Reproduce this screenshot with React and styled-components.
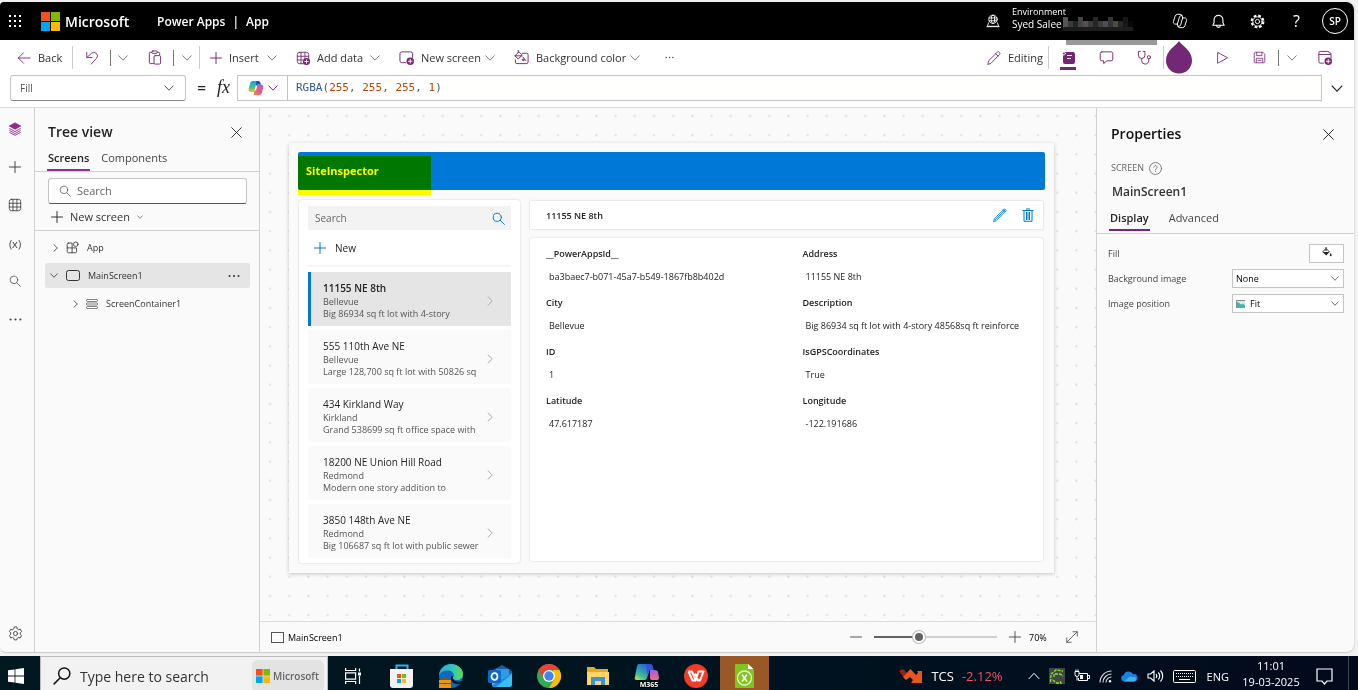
import React, { useState } from "react";
import styled, { createGlobalStyle } from "styled-components";

const purple = "#742774";

const sites = [
    { title: "11155 NE 8th", city: "Bellevue", text: "Big 86934 sq ft lot with 4-story" },
    { title: "555 110th Ave NE", city: "Bellevue", text: "Large 128,700 sq ft lot with 50826 sq" },
    { title: "434 Kirkland Way", city: "Kirkland", text: "Grand 538699 sq ft office space with" },
    { title: "18200 NE Union Hill Road", city: "Redmond", text: "Modern one story addition to" },
    { title: "3850 148th Ave NE", city: "Redmond", text: "Big 106687 sq ft lot with public sewer" },
];

const fields = [
    ["__PowerAppsId__", "ba3baec7-b071-45a7-b549-1867fb8b402d"],
    ["Address", "11155 NE 8th"],
    ["City", "Bellevue"],
    ["Description", "Big 86934 sq ft lot with 4-story 48568sq ft reinforce"],
    ["ID", "1"],
    ["IsGPSCoordinates", "True"],
    ["Latitude", "47.617187"],
    ["Longitude", "-122.191686"],
];

/* Icons */
const Icon = ({ size = 16, box = 16, sw = 1, children, ...rest }) => (
    <svg width={size} height={size} viewBox={`0 0 ${box} ${box}`} fill="none" stroke="currentColor"
        strokeWidth={sw} strokeLinecap="round" strokeLinejoin="round" aria-hidden="true" {...rest}>
        {children}
    </svg>
);

const Chevron = ({ w = 10, sw = 1 }) => (
    <svg width={w} height={w / 2 + 1} viewBox="0 0 10 6" fill="none" stroke="currentColor" strokeWidth={sw} aria-hidden="true">
        <path d="M.5.5 5 5.2 9.500.5" />
    </svg>
);

const ChevronRight = ({ h = 10 }) => (
    <svg width={h / 2 + 1} height={h} viewBox="0 0 6 10" fill="none" stroke="currentColor" aria-hidden="true">
        <path d="M.7.500 5.300 5 .7 9.500" />
    </svg>
);

const WindowsSquares = ({ size }) => (
    <svg width={size} height={size} viewBox="0 0 19 19" aria-hidden="true">
        <path fill="#f25022" d="M0 0h9v9H0z" />
        <path fill="#7fba00" d="M10 0h9v9h-9z" />
        <path fill="#00a4ef" d="M0 10h9v9H0z" />
        <path fill="#ffb900" d="M10 10h9v9h-9z" />
    </svg>
);

const Waffle = () => (
    <svg width="14" height="14" viewBox="0 0 14 14" fill="#fff" aria-hidden="true">
        {[1, 6, 11].map(y => [1, 6, 11].map(x => <rect key={`${x}-${y}`} x={x} y={y} width="2" height="2" />))}
    </svg>
);

const Search = ({ size = 12, sw }) => (
    <Icon size={size} sw={sw}><circle cx="6.500" cy="6.500" r="5" /><path d="m10.200 10.200 5 5" /></Icon>
);
const SearchLeft = () => (
    <Icon size={18} sw={1.300}><circle cx="10" cy="5.800" r="5" /><path d="M6.400 9.500 1 15" /></Icon>
);
const Plus = ({ size = 12 }) => <Icon size={size} box={12}><path d="M6 .5v11M.5 6h11" /></Icon>;
const Close = () => <Icon size={11} box={11} sw={.9}><path d="m.7.700 9.600 9.600m0-9.600L.7 10.300" /></Icon>;
const Dots = ({ size = 12 }) => (
    <Icon size={size} box={12} stroke="none" fill="currentColor">
        <circle cx="1.500" cy="6" r="1" /><circle cx="6" cy="6" r="1" /><circle cx="10.500" cy="6" r="1" />
    </Icon>
);
const Badge = () => <g><circle cx="12" cy="12" r="4" fill={purple} stroke="none" /><path stroke="#fff" d="M12 10v4m-2-2h4" /></g>;
const Back = () => <Icon size={14}><path d="M7.500 2 1.500 8l6 6M1.500 8H15" /></Icon>;
const Undo = () => <Icon size={14}><path d="M2 1.500v6h6M2.300 7.300l5-4.600a4 4 0 0 1 5.700 5.800L7 15" /></Icon>;
const Paste = () => (
    <Icon size={15}>
        <path d="M5 2.500H3.500a1 1 0 0 0-1 1v10a1 1 0 0 0 1 1H7M11 2.500h1.500a1 1 0 0 1 1 1V5" />
        <rect x="5" y="1" width="6" height="2.600" rx="1.200" /><rect x="7.500" y="6" width="7" height="9" rx="1.200" />
    </Icon>
);
const TableGrid = ({ size = 14, badge }) => (
    <Icon size={size}>
        <rect x="1.500" y="1.500" width="13" height="13" rx="2.500" />
        <path d="M1.500 6h13M1.500 10.300h13M5.700 1.500v13M10.200 1.500v13" />
        {badge && <Badge />}
    </Icon>
);
const NewScreenIcon = () => (
    <Icon size={15}><path d="M7 13.500H3a2 2 0 0 1-2-2V4a2 2 0 0 1 2-2h9.500a2 2 0 0 1 2 2v4" /><Badge /></Icon>
);
const PaintScreen = () => (
    <Icon size={15}>
        <path d="M9 3.500h4.500A1.500 1.500 0 0 1 15 5v8a1.500 1.500 0 0 1-1.500 1.500H3A1.500 1.500 0 0 1 1.500 13v-2.500" />
        <path d="m5 2.200-4 4 3.500 3.500 4-4zM1.200 6.200h7M4.500 0v3M9.500 7.500l3.300 4" /><circle cx="9.800" cy="10.500" r="1" />
    </Icon>
);
const Pencil = ({ size = 14 }) => (
    <Icon size={size}><path d="m1 15 1-4L11.700 1.500a1.600 1.600 0 0 1 2.500 0 1.700 1.700 0 0 1 0 2.600L4.700 13.900zM10 3.200l2.700 2.700" /></Icon>
);
const EditPen = () => (
    <Icon size={14}><path d="m.8 15.200.9-3L13 .9l2 2L3.700 14.300zM2.600 13.300 14 2M11.800 2.200l2 2" /></Icon>
);
const PropertiesIcon = () => (
    <svg width="13" height="13" viewBox="0 0 13 13" aria-hidden="true">
        <rect x="1" y="1" width="12" height="12" rx="2" fill={purple} /><path stroke="#fff" d="M5 4.500h5M5 7.500h4" /><path fill={purple} stroke="#fff" strokeWidth=".7" d="m1.800.400.6 1.400L4 2.400l-1.600.6-.6 1.500L1.200 3-.3 2.400l1.500-.6z" />
    </svg>
);
const Comment = () => (
    <Icon size={15}><path d="M3 2h10a1.700 1.700 0 0 1 1.700 1.700v6A1.700 1.700 0 0 1 13 11.500H8.500L5 14.500v-3H3a1.700 1.700 0 0 1-1.700-1.700v-6A1.700 1.700 0 0 1 3 2z" /></Icon>
);
const Checker = () => (
    <Icon size={15}>
        <path d="M3.500 1.500h-2v4a3.500 3.500 0 0 0 7 0v-4h-2M5 9v2.500a3.500 3.500 0 0 0 3.500 3.500c2.500 0 4-1.500 4-4V9.500" />
        <circle cx="12.700" cy="7.700" r="1.700" />
    </Icon>
);
const Play = () => <Icon size={14}><path d="M3 2v12l11-6z" /></Icon>;
const Save = () => (
    <Icon size={13}><path d="M1.500 3A1.500 1.500 0 0 1 3 1.500h9l2.500 2.500v9a1.500 1.500 0 0 1-1.500 1.500H3A1.500 1.500 0 0 1 1.500 13zM4.500 1.700v4h6.500v-4M4 14.300V9h8v5.300M6 11.500h4" /></Icon>
);
const Publish = () => (
    <Icon size={15}><path d="M7 14H3.500A1.500 1.500 0 0 1 2 12.500V3a1.500 1.500 0 0 1 1.500-1.500h8A1.500 1.500 0 0 1 13 3h.5A1.500 1.500 0 0 1 15 4.500v4M2 4.800h12.500" /><Badge /></Icon>
);
const Layers = () => (
    <svg width="14" height="14" viewBox="0 0 16 16" fill="none" stroke="#8f2c8f" aria-hidden="true">
        <path fill="#8f2c8f" d="m8 1 6.500 3.600L8 8.200 1.500 4.600z" /><path d="M1.500 7.300 8 11l6.500-3.700M1.500 9.500 8 13.200l6.500-3.700M1.500 11.700 8 15.300l6.500-3.600" />
    </svg>
);
const Gear = ({ size = 16, sw = 1 }) => (
    <Icon size={size} sw={sw}>
        <path d="m6.600 1.300-.4 1.800-1.500.9-1.800-.6-1.400 2.500 1.400 1.300v1.700l-1.400 1.300 1.400 2.500 1.800-.6 1.500.9.400 1.800h2.800l.4-1.800 1.500-.9 1.800.6 1.400-2.500-1.400-1.300V7.200l1.400-1.300-1.400-2.500-1.800.6-1.500-.9-.4-1.800z" />
        <circle cx="8" cy="8" r="2.200" />
    </Icon>
);
const SuiteGear = () => (
    <Icon size={15} sw={1}>
        <circle cx="8" cy="8" r="6.300" strokeDasharray="2.900 2.050" strokeWidth="2.200" strokeLinecap="butt" /><circle cx="8" cy="8" r="5" /><circle cx="8" cy="8" r="2.300" />
    </Icon>
);
const EnvironmentIcon = () => (
    <Icon size={14}>
        <circle cx="8" cy="6" r="4.800" /><ellipse cx="8" cy="6" rx="2" ry="4.800" /><path d="M3.500 4.500h9M3.500 7.700h9M3 10l-1.500 4h13L13 10M1 14.500h14" />
    </Icon>
);
const CopilotLine = () => (
    <Icon size={16} box={18} sw={1.100}>
        <path d="M12 5.500 11.300 3A2.200 2.200 0 0 0 9.200 1.500H6.300A3 3 0 0 0 3.500 3.600L1.600 9.500A2.300 2.300 0 0 0 3.800 12.500H6L8.300 4.700A2.800 2.800 0 0 1 11 2.700" />
        <path d="M6 12.500 6.700 15a2.200 2.200 0 0 0 2.100 1.500h2.900a3 3 0 0 0 2.800-2.100l1.900-5.900a2.300 2.300 0 0 0-2.200-3H12l-2.300 7.800A2.800 2.800 0 0 1 7 15.300" />
    </Icon>
);
const Bell = () => (
    <Icon size={15} sw={1.200}><path d="M8 1.500a4.700 4.700 0 0 0-4.700 4.700v3L2 12h12l-1.300-2.800v-3A4.700 4.700 0 0 0 8 1.500zM6 12.300a2 2 0 0 0 4 0" /></Icon>
);
const CopilotColor = () => (
    <svg width="16" height="16" viewBox="0 0 16 16" aria-hidden="true">
        <defs>
            <linearGradient id="cpA" x1="0" y1="0" x2="0" y2="1"><stop offset="0" stopColor="#1aa3e8" /><stop offset=".55" stopColor="#45c18a" /><stop offset="1" stopColor="#f0c419" /></linearGradient>
            <linearGradient id="cpB" x1="1" y1="0" x2="0" y2="1"><stop offset="0" stopColor="#a560e8" /><stop offset=".5" stopColor="#e8568c" /><stop offset="1" stopColor="#f58a42" /></linearGradient>
        </defs>
        <path fill="url(#cpA)" d="M4.500 1h6L7.300 12H3A2.500 2.500 0 0 1 .7 8.800L2.300 2.800A2.300 2.300 0 0 1 4.500 1z" />
        <path fill="url(#cpB)" d="M11.500 15h-6L8.700 4.500H13A2.400 2.400 0 0 1 15.300 7.500l-1.600 5.700A2.300 2.300 0 0 1 11.500 15z" />
        <path fill="#1e4fc2" d="M8 1h2.500A2 2 0 0 1 12.300 2.500l.7 2H9.500L8.300 8z" />
        <path fill="#fff" d="m7.800 5.500 1.500 0L8 10.500H6.500z" />
    </svg>
);
const AppIcon = () => (
    <Icon size={13}><path d="M3 2.500h4.500v12H3A1.500 1.500 0 0 1 1.500 13V4A1.500 1.500 0 0 1 3 2.500zM1.500 8.500H13v4.500a1.500 1.500 0 0 1-1.500 1.500h-4" /><circle cx="12" cy="4" r="2.800" /></Icon>
);
const ScreenIcon = ({ w = 14, r = 2 }) => (
    <svg width={w} height="11" viewBox={`0 0 ${w} 11`} fill="none" stroke="currentColor" aria-hidden="true"><rect x=".5" y=".5" width={w - 1} height="10" rx={r} /></svg>
);
const ContainerIcon = () => (
    <svg width="12" height="10" viewBox="0 0 12 10" fill="none" stroke="#666" strokeWidth=".8" aria-hidden="true">
        <rect x=".5" y=".5" width="11" height="2" rx=".6" /><rect x=".5" y="4" width="11" height="2" rx=".6" /><rect x=".5" y="7.500" width="11" height="2" rx=".6" />
    </svg>
);
const PaintBucket = () => (
    <svg width="12" height="12" viewBox="0 0 12 12" aria-hidden="true"><path fill="#222" d="M1.500 6h7L5.200 9.500z" /><path stroke="#222" fill="none" d="M1.500 6 5 2.500 8.500 6M5 5V1" /><path fill="#222" d="M9.700 7c1.300 1.800 1.200 3.300 0 3.300S8.500 8.800 9.700 7z" /></svg>
);
const Picture = () => (
    <svg width="9" height="8" viewBox="0 0 9 8" aria-hidden="true"><path fill="#d7eef0" d="M0 0h9v8H0z" /><path fill="#3fb8b4" d="m0 3 2-1 3 2.500 2-1 2 2V8H0z" /><path fill="none" stroke="#888" d="M.5 8V.5H9" /></svg>
);
const Trash = () => (
    <svg width="12" height="14" viewBox="0 0 12 14" fill="none" stroke="#0078d4" aria-hidden="true"><path d="M.5 2.500h11M2 2.500v10.800h8V2.500M4 1h4M4.500 4v8M6 4v8M7.500 4v8" /></svg>
);
const Expand = () => <Icon size={14}><path d="m2 14 12-12M9 2h5v5M2 9v5h5" /></Icon>;

const EnvironmentMosaic = () => (
    <svg width="74" height="16" viewBox="0 0 74 16" aria-hidden="true">
        {["#555", "#343d3a", "#242424", "#444", "#555058", "#3b3b3b", "#262626", "#3c3c42", "#4d4d5a", "#333", "#4b4d3d", "#272727", "#171717", "#080808"].map((c, i) => (
            <g key={i}><rect x={i * 5 + 2} y={i % 3 ? 5 : 1} width="5" height="10" fill={c} /><rect x={i * 5 + 2} y="11" width="5" height="4" fill="#1d1d1d" /></g>
        ))}
    </svg>
);

const DotGrid = () => (
    <DotSvg aria-hidden="true">
        <defs><pattern id="dots" width="19.2" height="19.2" patternUnits="userSpaceOnUse"><rect x="9" y="7" width="2" height="2" fill="#dedede" /></pattern></defs>
        <rect width="100%" height="100%" fill="url(#dots)" />
    </DotSvg>
);

/* Taskbar icons */
const StartLogo = () => (
    <svg width="16" height="16" viewBox="0 0 16 16" fill="#fff" aria-hidden="true"><path d="M0 2.300 6.600 1.400v6.100H0zM7.400 1.300 16 0v7.500H7.400zM0 8.400h6.600v6.200L0 13.700zM7.400 8.400H16V16l-8.600-1.300z" /></svg>
);
const TaskView = () => (
    <svg width="16" height="16" viewBox="0 0 16 16" fill="none" stroke="#fff" strokeWidth="1.2" aria-hidden="true"><path d="M.6 0v2.500h10V0M.6 16v-2.500h10V16M.6 4.800h10v6.400H.6zM14.500.5v3M14.500 8v8" /><path fill="#fff" stroke="none" d="M13 4.500h3v3h-3z" /></svg>
);
const Store = () => (
    <svg width="24" height="24" viewBox="0 0 24 24" aria-hidden="true"><path fill="none" stroke="#2fb4e8" strokeWidth="2" d="M6.500 6V1.500h11V6" /><path fill="#f3f3f3" d="M0 5h23v16a3 3 0 0 1-3 3H3a3 3 0 0 1-3-3z" /><path fill="#f25022" d="M7 10h4v4H7z" /><path fill="#7fba00" d="M12 10h4v4h-4z" /><path fill="#00a4ef" d="M7 15h4v4H7z" /><path fill="#ffb900" d="M12 15h4v4h-4z" /></svg>
);
const Edge = () => (
    <svg width="24" height="24" viewBox="0 0 24 24" aria-hidden="true">
        <defs><linearGradient id="edgeT" x1="0" x2="1"><stop offset="0" stopColor="#2aa5e0" /><stop offset=".6" stopColor="#35c7b5" /><stop offset="1" stopColor="#62d84e" /></linearGradient></defs>
        <circle cx="12" cy="12" r="12" fill="#1068b8" />
        <path fill="url(#edgeT)" d="M0 12C0 5 5.500 0 12 0s12 4.500 12 10c0 4-3 6-6 6s-5-1-3.500-3C16 10 13 6.500 9 6.500S1 8 0 12z" />
        <path fill="#001722" d="M14 12c-1 5 4 7 9.500 4.500-.5 1.500-1.500 3-2.500 3.500-6 1-10-3-9-7.500z" />
        <path fill="#e8941a" d="M0 16h12v8H0z" /><path fill="none" stroke="#8f5108" d="M4 16v-1.500h4V16M0 19.500h12M6 18.500v2" />
    </svg>
);
const Outlook = () => (
    <svg width="24" height="24" viewBox="0 0 24 24" aria-hidden="true"><path fill="#155ea8" d="M4 6.500 14 1l10 6v8H4z" /><path fill="#2d9be8" d="M8 5h13v10H8z" /><path fill="#37c1f2" d="m24 9-12 7-8-4v9a2 2 0 0 0 2 2h16a2 2 0 0 0 2-2z" /><path fill="#1f8be0" d="m4 21 20-12v1L8 23H6z" /><rect y="6" width="13" height="13" rx="1.500" fill="#1266c4" /><ellipse cx="6.500" cy="12.500" rx="3" ry="3.300" fill="none" stroke="#fff" strokeWidth="1.700" /></svg>
);
const Chrome = () => (
    <svg width="24" height="24" viewBox="0 0 24 24" aria-hidden="true"><circle cx="12" cy="12" r="12" fill="#34a853" /><path fill="#ea4335" d="M1.600 6A12 12 0 0 1 22.400 6H12L7 15z" /><path fill="#fbbc05" d="M22.400 6A12 12 0 0 1 12 24l5.200-9L16 6z" /><circle cx="12" cy="12" r="6" fill="#fff" /><circle cx="12" cy="12" r="4.700" fill="#4285f4" /></svg>
);
const Explorer = () => (
    <svg width="22" height="20" viewBox="0 0 22 20" aria-hidden="true"><path fill="#e8a825" d="M0 1h7l2 2h12v4H0z" /><path fill="#ffd666" d="M0 6h22v13H0z" /><path fill="#3d93d8" d="M4 19v-8h14v8h-4v-4H8v4z" /></svg>
);
const M365 = () => (
    <svg width="26" height="24" viewBox="0 0 26 24" aria-hidden="true">
        <defs><linearGradient id="mL" x1="0" y1="1" x2=".6" y2="0"><stop offset="0" stopColor="#e6dc3c" /><stop offset=".4" stopColor="#37b89a" /><stop offset="1" stopColor="#2466dd" /></linearGradient><linearGradient id="mR" x1="0" y1="0" x2="0" y2="1"><stop offset="0" stopColor="#a45be0" /><stop offset="1" stopColor="#f06c8a" /></linearGradient></defs>
        <path fill="url(#mL)" d="M5 0h10c2 0 2 1 1.500 3L13 14c-1 2-2 2-3 2H3c-2 0-3-1-2-3L3 2c.5-1.500 1-2 2-2z" /><path fill="#2c56d8" d="M12 0h4c2 0 2.500 1 3 3l1 3h-5l-2 5z" /><path fill="url(#mR)" d="M16 6h5c2 0 2.500 1 3 2l1 6c0 1-1 2-2 2h-5c-1 0-2-1-2-2z" />
        <text x="15" y="23" fontFamily="Open Sans, sans-serif" fontSize="7" fontWeight="700" fill="#fff" stroke="#000" strokeWidth="2" paintOrder="stroke" textAnchor="middle">M365</text>
    </svg>
);
const Wps = () => (
    <svg width="24" height="24" viewBox="0 0 24 24" aria-hidden="true"><circle cx="12" cy="12" r="12" fill="#f03c28" /><path fill="none" stroke="#fff" strokeWidth="2" strokeLinejoin="round" d="M4.500 7.500H8l3.500 9 3-9h5L16 16.500h-2l-3-7M4.500 7.500 8.500 16.500h2.500l1-2" /></svg>
);
const GreenSheet = () => (
    <svg width="19" height="24" viewBox="0 0 19 24" aria-hidden="true"><path fill="#80c41c" d="M1 0h12l6 6v18H1a1 1 0 0 1-1-1V1a1 1 0 0 1 1-1z" /><path fill="#fff" d="M13 0v5h5.500z" /><circle cx="9.500" cy="14" r="7" fill="none" stroke="#e7f7cf" strokeWidth="1.300" /><path stroke="#fff" strokeWidth="1.600" d="m7 10.500 5 7m0-7-5 7" /></svg>
);
const StockDown = () => (
    <svg width="24" height="16" viewBox="0 0 24 16" aria-hidden="true"><path fill="#8d2415" d="m0 3 4-2 5 5-3 5z" /><path fill="#e9551c" d="m4 9 7.500-8 5.500 6 2-2-1-2h5v12H12l2-3-3-3-4 3z" /></svg>
);
const Snip = () => (
    <svg width="16" height="16" viewBox="0 0 16 16" aria-hidden="true"><path fill="#454545" d="M0 0h16v16H0z" /><path fill="none" stroke="#7cf01c" strokeWidth="1.300" strokeDasharray="3 1" d="M1.500 14 2 6l5-4 7 1M5 9V6h6l3 2M6 14l-3-3M7 15h5l-1-2" /></svg>
);
const Battery = () => (
    <svg width="16" height="14" viewBox="0 0 16 14" fill="none" stroke="#fff" aria-hidden="true"><path d="M5 4.500h8.500v7H4.500V9M14 6.500h1.500v3H14M1 2.500h4v3a2 2 0 0 1-4 0zM2 2V.5M4 2V.5M3 7.500v4" /><path fill="#fff" stroke="none" d="M6 6h3v4H6z" /></svg>
);
const Wifi = () => (
    <svg width="13" height="13" viewBox="0 0 13 13" fill="none" stroke="#ddd" strokeWidth="1.100" aria-hidden="true"><path d="M1 12.500A11.500 11.500 0 0 1 12.500 1M4 12.500A8.500 8.500 0 0 1 12.500 4M7 12.500A5.500 5.500 0 0 1 12.500 7" /><circle cx="11" cy="11.300" r="1.200" fill="#fff" stroke="none" /></svg>
);
const Cloud = () => (
    <svg width="17" height="11" viewBox="0 0 17 11" aria-hidden="true"><path fill="#1683dc" d="M3.500 10.500a3.300 3.300 0 0 1-.8-6.500A5 5 0 0 1 12 3.200a3.700 3.700 0 0 1 1.500 7.300z" /><path fill="#42b0f2" d="m3 10.500 6-5 6 1a4 4 0 0 1-1.500 4z" /></svg>
);
const Speaker = () => (
    <svg width="17" height="14" viewBox="0 0 17 14" fill="none" stroke="#fff" strokeWidth="1.100" aria-hidden="true"><path d="M1 5h2.500L7 2v10L3.500 9H1zM9 5a3 3 0 0 1 0 4M11.300 3.500a5 5 0 0 1 0 7M13.500 1.500a8 8 0 0 1 0 11" /></svg>
);
const Keyboard = () => (
    <svg width="23" height="13" viewBox="0 0 23 13" fill="none" stroke="#fff" aria-hidden="true"><rect x=".5" y=".5" width="22" height="12" rx="1" /><path strokeDasharray="1 1" d="M3 3.500h17M3 6.500h17" /><path d="M6 9.500h11" /></svg>
);
const Notification = () => (
    <svg width="17" height="17" viewBox="0 0 17 17" fill="none" stroke="#fff" strokeWidth="1.200" aria-hidden="true"><path d="M1 1h15v12h-5l-2.500 3L6 13H1z" /></svg>
);

const App = () => {
    const [selected, setSelected] = useState(0);
    const [zoom, setZoom] = useState(35);

    return (
        <Page>
            <GlobalStyle />
            <Studio>
                {/* Black suite header */}
                <SuiteHeader>
                    <PlainButton aria-label="App launcher"><Waffle /></PlainButton>
                    <Brand><WindowsSquares size={19} />Microsoft</Brand>
                    <ProductName>Power Apps<i>|</i>App</ProductName>
                    <Environment>
                        <EnvironmentIcon />
                        <div><small>Environment</small><EnvName>Syed Salee<Redacted><EnvironmentMosaic /></Redacted></EnvName></div>
                        <GreyStrip />
                    </Environment>
                    <SuiteButton aria-label="Copilot"><CopilotLine /></SuiteButton>
                    <SuiteButton aria-label="Notifications"><Bell /></SuiteButton>
                    <SuiteButton aria-label="Settings"><SuiteGear /></SuiteButton>
                    <SuiteButton aria-label="Help"><HelpMark>?</HelpMark></SuiteButton>
                    <Avatar aria-label="Account">SP</Avatar>
                </SuiteHeader>

                {/* Command bar */}
                <CommandBar>
                    <Command $w={55} $first><Back /><span>Back</span></Command>
                    <Divider $tall />
                    <IconCommand $w={37} aria-label="Undo"><Undo /></IconCommand>
                    <Divider $dark />
                    <IconCommand $w={24} $grey aria-label="Undo options"><Chevron /></IconCommand>
                    <IconCommand $w={38} aria-label="Paste"><Paste /></IconCommand>
                    <Divider $dark />
                    <IconCommand $w={25} $grey aria-label="Paste options"><Chevron /></IconCommand>
                    <Divider $tall />
                    <Commands>
                        <Command $w={67} $menu><Plus /><span>Insert</span><Chevron /></Command>
                        <Command $w={84} $menu><TableGrid badge /><span>Add data</span><Chevron /></Command>
                        <Command $w={96} $menu><NewScreenIcon /><span>New screen</span><Chevron /></Command>
                        <Command $w={126} $menu><PaintScreen /><span>Background color</span><Chevron /></Command>
                        <IconCommand $w={20} aria-label="More commands"><Dots size={9} /></IconCommand>
                    </Commands>
                    <Command $w={61}><Pencil /><span>Editing</span></Command>
                    <Divider $tall />
                    <IconCommand $w={38} $active aria-label="Properties"><PropertiesIcon /></IconCommand>
                    <IconCommand $w={38} aria-label="Comments"><Comment /></IconCommand>
                    <IconCommand $w={38} aria-label="App checker"><Checker /></IconCommand>
                    <Divider $tall />
                    <Drop aria-hidden="true" width="28" height="33" viewBox="0 0 28 33"><path d="M14 0c2 4 13 9 13 19.500a13 13 0 0 1-26 0C1 9 12 4 14 0z" /></Drop>
                    <IconCommand $w={36} aria-label="Preview"><Play /></IconCommand>
                    <IconCommand $w={38} aria-label="Save"><Save /></IconCommand>
                    <Divider $dark />
                    <IconCommand $w={26} $grey aria-label="Save options"><Chevron /></IconCommand>
                    <IconCommand $w={38} aria-label="Publish"><Publish /></IconCommand>
                </CommandBar>

                {/* Formula bar */}
                <FormulaBar>
                    <PropertyPicker>
                        <select aria-label="Property"><option>Fill</option></select>
                        <Chevron />
                    </PropertyPicker>
                    <Equals>=</Equals>
                    <Fx>fx</Fx>
                    <CopilotButton aria-label="Copilot formula"><CopilotColor /><Chevron /></CopilotButton>
                    <Formula><b>RGBA</b>(<em>255</em>, <em>255</em>, <em>255</em>, <em>1</em>)</Formula>
                    <ExpandFormula aria-label="Expand formula bar"><Chevron w={12} /></ExpandFormula>
                </FormulaBar>

                <Workspace>
                    <Rail>
                        <RailButton aria-label="Tree view"><Layers /></RailButton>
                        <RailButton aria-label="Insert"><Plus /></RailButton>
                        <RailButton aria-label="Data"><TableGrid /></RailButton>
                        <RailButton aria-label="Variables">(x)</RailButton>
                        <RailButton aria-label="Search"><Search /></RailButton>
                        <RailButton aria-label="More"><Dots size={13} /></RailButton>
                        <RailButton aria-label="Settings" $last><Gear size={15} /></RailButton>
                    </Rail>

                    <TreePanel>
                        <PanelHead $pad="10px 17px 0 13px"><h2>Tree view</h2><PlainButton aria-label="Close tree view"><Close /></PlainButton></PanelHead>
                        <Tabs $pad="12px" $line="#8f2c8f">
                            <Tab $on>Screens</Tab>
                            <Tab>Components</Tab>
                        </Tabs>
                        <TreeSearch><Search /><input placeholder="Search" aria-label="Search tree" /></TreeSearch>
                        <NewScreen><Plus />New screen<Chevron w={6} /></NewScreen>
                        <Tree>
                            <TreeRow $indent={8}><ChevronRight h={8} /><AppIcon /><span>App</span></TreeRow>
                            <TreeRow $indent={5} $on><Chevron w={8} /><ScreenIcon /><span>MainScreen1</span><PlainButton aria-label="More actions"><Dots /></PlainButton></TreeRow>
                            <TreeRow $indent={28}><ChevronRight h={8} /><ContainerIcon /><span>ScreenContainer1</span></TreeRow>
                        </Tree>
                    </TreePanel>

                    <CanvasColumn>
                        <Canvas>
                            <DotGrid />
                            <Artboard>
                                <AppTitle>SiteInspector<Highlight /></AppTitle>
                                <AppBody>
                                    <Gallery>
                                        <GallerySearch><input placeholder="Search" aria-label="Search sites" /><Search size={13} sw={1.200} /></GallerySearch>
                                        <NewRecord><Plus />New</NewRecord>
                                        {sites.map((site, i) => (
                                            <Site key={site.title} $on={i === selected} onClick={() => setSelected(i)}>
                                                <div><strong>{site.title}</strong><p>{site.city}</p><p>{site.text}</p></div>
                                                <ChevronRight h={10} />
                                            </Site>
                                        ))}
                                    </Gallery>
                                    <Detail>
                                        <DetailHead>
                                            <h3>11155 NE 8th</h3>
                                            <PlainButton aria-label="Edit"><EditPen /></PlainButton>
                                            <PlainButton aria-label="Delete"><Trash /></PlainButton>
                                        </DetailHead>
                                        <DetailBody>
                                            {fields.map(([label, value]) => (
                                                <Field key={label}><dt>{label}</dt><dd>{value}</dd></Field>
                                            ))}
                                        </DetailBody>
                                    </Detail>
                                </AppBody>
                            </Artboard>
                        </Canvas>
                        <StatusBar>
                            <ScreenIcon w={13} r={0} />
                            <span>MainScreen1</span>
                            <PlainButton aria-label="Zoom out"><Icon size={12} box={12}><path d="M.5 6h11" /></Icon></PlainButton>
                            <Zoom type="range" aria-label="Zoom" value={zoom} onChange={e => setZoom(Number(e.target.value))} style={{ "--fill": `${zoom}%` }} />
                            <PlainButton aria-label="Zoom in"><Plus /></PlainButton>
                            <output>70%</output>
                            <PlainButton aria-label="Fit to window"><Expand /></PlainButton>
                        </StatusBar>
                    </CanvasColumn>

                    <PropsPanel>
                        <PanelHead $pad="12px 20px 0 14px"><h2>Properties</h2><PlainButton aria-label="Close properties"><Close /></PlainButton></PanelHead>
                        <Kind>SCREEN<Icon size={13}><circle cx="8" cy="8" r="7.400" /><path d="M6 6.300a2 2 0 1 1 3 1.800c-.7.400-1 .8-1 1.600M8 11.600v.2" /></Icon></Kind>
                        <ObjectName>MainScreen1</ObjectName>
                        <Tabs $pad="12px" $line={purple}>
                            <Tab $on>Display</Tab>
                            <Tab>Advanced</Tab>
                        </Tabs>
                        <PropRow><span>Fill</span><FillButton aria-label="Fill color"><PaintBucket /></FillButton></PropRow>
                        <PropRow>
                            <label htmlFor="bg-image">Background image</label>
                            <SelectBox><select id="bg-image"><option>None</option></select><Chevron w={8} /></SelectBox>
                        </PropRow>
                        <PropRow>
                            <label htmlFor="image-position">Image position</label>
                            <SelectBox><Picture /><select id="image-position"><option>Fit</option></select><Chevron w={8} /></SelectBox>
                        </PropRow>
                    </PropsPanel>
                </Workspace>
            </Studio>

            {/* Windows taskbar */}
            <Taskbar>
                <TaskInner>
                    <StartButton aria-label="Start"><StartLogo /></StartButton>
                    <TaskSearch>
                        <SearchLeft />
                        <input placeholder="Type here to search" aria-label="Type here to search" />
                        <Pill><WindowsSquares size={14} />Microsoft</Pill>
                    </TaskSearch>
                    <TaskButton aria-label="Task view"><TaskView /></TaskButton>
                    <TaskButton aria-label="Store"><Store /></TaskButton>
                    <TaskButton aria-label="Edge"><Edge /></TaskButton>
                    <TaskButton aria-label="Outlook"><Outlook /></TaskButton>
                    <TaskButton aria-label="Chrome"><Chrome /></TaskButton>
                    <TaskButton aria-label="File Explorer"><Explorer /></TaskButton>
                    <TaskButton aria-label="Microsoft 365"><M365 /></TaskButton>
                    <TaskButton aria-label="WPS"><Wps /></TaskButton>
                    <TaskButton aria-label="Spreadsheet" $on><GreenSheet /></TaskButton>
                    <Stock><StockDown /><span>TCS</span><em>-2.12%</em></Stock>
                    <Tray>
                        <TrayUp width="12" height="8" viewBox="0 0 12 8" aria-hidden="true"><path d="M.7 7 6 1.300 11.300 7" /></TrayUp>
                        <Snip /><Battery /><Wifi /><Cloud /><Speaker /><Keyboard />
                    </Tray>
                    <Language>ENG</Language>
                    <Clock><span>11:01</span><span>19-03-2025</span></Clock>
                    <NotifyButton aria-label="Notifications"><Notification /></NotifyButton>
                </TaskInner>
            </Taskbar>
        </Page>
    );
};

const GlobalStyle = createGlobalStyle`
    * { box-sizing: border-box; }
    body {
        margin: 0;
        font-family: "Open Sans", "Noto Sans", sans-serif;
        font-size: 11px;
        color: #242424;
    }
    h2, h3, p, dl, dd { margin: 0; }
    button, input, select { font: inherit; color: inherit; }
    svg { flex: none; display: block; }
`;
const Page = styled.div`
    display: flex;
    flex-direction: column;
    height: 100vh;
    overflow: hidden;
    background: #f3f3f3;
`;
const Studio = styled.div`
    flex: 1;
    min-height: 0;
    display: flex;
    flex-direction: column;
    margin: 2px 4px 3px 0;
    border-bottom: 1px solid #d0d0d0;
    border-radius: 4px 8px 8px 6px;
    overflow: hidden;
    background: #fafafa;
    box-shadow: 1px 0 2px #ddd;
`;
const PlainButton = styled.button`
    display: flex;
    align-items: center;
    border: 0;
    padding: 0;
    background: none;
`;
const SuiteHeader = styled.header`
    display: flex;
    align-items: center;
    height: 38px;
    flex: none;
    padding: 0 6px 0 8px;
    background: #000;
    color: #fff;
`;
const Brand = styled.div`
    display: flex;
    align-items: center;
    gap: 5px;
    width: 116px;
    margin-left: 19px;
    font-size: 14px;
    font-weight: 600;
`;
const ProductName = styled.div`
    flex: 1;
    font-size: 12px;
    font-weight: 600;

    i {
        margin: 0 7px;
        font-style: normal;
    }
`;
const Environment = styled.div`
    position: relative;
    display: flex;
    align-items: center;
    gap: 12px;
    width: 174px;
    line-height: 13px;

    div { padding-bottom: 6px; }
    small {
        display: block;
        font-size: 9px;
        line-height: 12px;
    }
`;
const EnvName = styled.span`
    display: flex;
    align-items: center;
    height: 13px;
    font-size: 10px;
`;
const Redacted = styled.span`
    margin-left: -1px;
`;
const GreyStrip = styled.span`
    position: absolute;
    left: 80px;
    bottom: -8px;
    width: 91px;
    height: 5px;
    background: #999;
`;
const SuiteButton = styled(PlainButton)`
    justify-content: center;
    width: 39px;
    height: 38px;
`;
const HelpMark = styled.span`
    font-size: 16px;
`;
const Avatar = styled(PlainButton)`
    justify-content: center;
    width: 26px;
    height: 26px;
    margin-left: 6px;
    border: 1px solid #fff;
    border-radius: 50%;
    font-size: 10px;
    font-weight: 600;
`;
const CommandBar = styled.div`
    display: flex;
    align-items: center;
    height: 35px;
    flex: none;
    padding-right: 11px;
    background: #fff;
`;
const Commands = styled.div`
    display: flex;
    align-items: center;
    flex: 1;
    gap: 19px;
    padding-left: 10px;
`;
const Command = styled.button`
    display: flex;
    align-items: center;
    gap: 7px;
    width: ${p => p.$w}px;
    height: 28px;
    margin: ${p => (p.$first ? "0 0 0 17px" : "0")};
    padding: 0;
    border: 0;
    background: none;
    color: ${purple};
    white-space: nowrap;

    span {
        flex: 1;
        margin-right: ${p => (p.$menu ? "-4px" : "0")};
        text-align: left;
        color: #333;
    }
    svg:last-child { color: #7b7f86; }
`;
const IconCommand = styled.button`
    display: flex;
    align-items: center;
    justify-content: center;
    width: ${p => p.$w}px;
    height: 24px;
    padding: 0;
    border: 0;
    background: ${p => (p.$active ? `linear-gradient(${purple}, ${purple}) center bottom / 16px 3px no-repeat` : "none")};
    color: ${p => (p.$grey ? "#7b7f86" : purple)};
`;
const Divider = styled.span`
    flex: none;
    width: 1px;
    height: ${p => (p.$tall ? 23 : 16)}px;
    background: ${p => (p.$dark ? "#777" : "#ccc")};
`;
const Drop = styled.svg`
    margin: 0 11px 0 1px;
    fill: ${purple};
`;
const FormulaBar = styled.div`
    display: flex;
    height: 33px;
    flex: none;
    padding: 0 0 6px 10px;
    border-bottom: 1px solid #dcdcdc;
    background: #fff;
`;
const PropertyPicker = styled.div`
    display: flex;
    align-items: center;
    width: 176px;
    padding-right: 11px;
    border: 1px solid #c4c4c4;
    border-bottom-color: #888;
    border-radius: 3px;
    color: #555;

    select {
        flex: 1;
        padding: 0 9px;
        border: 0;
        appearance: none;
        background: none;
        font-size: 10px;
    }
`;
const Equals = styled.span`
    width: 31px;
    text-align: center;
    font-size: 16px;
    line-height: 26px;
`;
const Fx = styled.span`
    width: 20px;
    font: italic 18px/24px "Liberation Serif", serif;
    color: #222;
`;
const CopilotButton = styled.button`
    display: flex;
    align-items: center;
    justify-content: center;
    gap: 4px;
    width: 51px;
    padding: 0;
    border: 1px solid #c4c4c4;
    background: #fff;
    color: ${purple};
`;
const Formula = styled.code`
    flex: 1;
    padding-left: 8px;
    border: 1px solid #c4c4c4;
    border-left: 0;
    background: #fffffe;
    font: 11px/23px "DejaVu Sans Mono", monospace;
    color: #555;

    b {
        font-weight: 400;
        color: #2b5797;
    }
    em {
        font-style: normal;
        color: #b5480d;
    }
`;
const ExpandFormula = styled(PlainButton)`
    justify-content: center;
    width: 29px;
    margin-right: 3px;
`;
const Workspace = styled.div`
    display: flex;
    flex: 1;
    min-height: 0;
`;
const Rail = styled.nav`
    display: flex;
    flex-direction: column;
    width: 35px;
    padding-top: 2px;
    border-right: 1px solid #d1d1d1;
`;
const RailButton = styled.button`
    display: flex;
    align-items: center;
    justify-content: center;
    width: 30px;
    height: 38px;
    margin-top: ${p => (p.$last ? "auto" : "0")};
    padding: 0;
    border: 0;
    background: none;
    color: #444;
`;
const TreePanel = styled.aside`
    width: 225px;
    border-right: 1px solid #d1d1d1;
`;
const PanelHead = styled.div`
    display: flex;
    justify-content: space-between;
    align-items: center;
    padding: ${p => p.$pad};

    h2 {
        font-size: 14px;
        line-height: 28px;
        font-weight: 600;
    }
`;
const Tabs = styled.div`
    display: flex;
    gap: 10px;
    height: 26px;
    padding: 0 ${p => p.$pad};
    border-bottom: 1px solid #d1d1d1;
    --line: ${p => p.$line};
`;
const Tab = styled.button`
    height: 25px;
    padding: 0 1px;
    border: 0;
    border-bottom: 2px solid ${p => (p.$on ? "var(--line)" : "transparent")};
    background: none;
    font-weight: ${p => (p.$on ? 600 : 400)};
    line-height: 20px;
    color: ${p => (p.$on ? "#242424" : "#444")};
`;
const TreeSearch = styled.div`
    display: flex;
    align-items: center;
    gap: 6px;
    height: 26px;
    margin: 6px 12px 0 13px;
    padding-left: 10px;
    border: 1px solid #c4c4c4;
    border-bottom-color: #555;
    border-radius: 3px;
    background: #fff;
    color: #555;

    input {
        flex: 1;
        min-width: 0;
        padding: 0 0 1px;
        border: 0;
        outline: 0;
        background: none;
    }
    input::placeholder { color: #666; }
`;
const NewScreen = styled.button`
    display: flex;
    align-items: center;
    gap: 7px;
    width: 100%;
    height: 27px;
    padding: 0 0 1px 16px;
    border: 0;
    border-bottom: 1px solid #d1d1d1;
    background: none;
    color: #333;
`;
const Tree = styled.div`
    display: flex;
    flex-direction: column;
    gap: 3px;
    padding: 4px 9px 0 10px;
`;
const TreeRow = styled.div`
    display: flex;
    align-items: center;
    gap: 8px;
    height: 25px;
    padding: 0 10px 0 ${p => p.$indent}px;
    border-radius: 2px;
    background: ${p => (p.$on ? "#e5e5e5" : "none")};
    font-size: 9px;
    color: #333;

    span { flex: 1; }
`;
const CanvasColumn = styled.main`
    display: flex;
    flex-direction: column;
    flex: 1;
    min-width: 0;
`;
const Canvas = styled.div`
    position: relative;
    display: flex;
    flex: 1;
    min-height: 0;
    padding: 35px 42px 48px 29px;
`;
const DotSvg = styled.svg`
    position: absolute;
    inset: 0;
    width: 100%;
    height: 100%;
`;
const Artboard = styled.div`
    position: relative;
    display: flex;
    flex-direction: column;
    flex: 1;
    min-width: 0;
    padding: 9px;
    background: #fafafa;
    box-shadow: 0 1px 4px rgba(0, 0, 0, 0.22);
`;
const AppTitle = styled.div`
    position: relative;
    height: 38px;
    flex: none;
    padding-left: 8px;
    border-radius: 2px;
    background: #0078d7;
    color: #fff;
    font-weight: 700;
    line-height: 38px;
`;
const Highlight = styled.span`
    position: absolute;
    top: 4px;
    left: 0;
    width: 133px;
    height: 39px;
    background: #ff0;
    mix-blend-mode: multiply;
`;
const AppBody = styled.div`
    display: flex;
    flex: 1;
    min-height: 0;
    gap: 10px;
    padding: 10px 2px 1px 1px;
`;
const Gallery = styled.section`
    display: flex;
    flex-direction: column;
    width: 221px;
    padding: 6px 9px 0;
    border-radius: 3px;
    background: #fff;
    box-shadow: 0 0 2px rgba(0, 0, 0, 0.2);
`;
const GallerySearch = styled.div`
    display: flex;
    align-items: center;
    height: 24px;
    padding: 0 6px 0 7px;
    background: #f3f3f3;
    color: #0078d4;

    input {
        flex: 1;
        min-width: 0;
        padding: 0;
        border: 0;
        background: none;
        font-size: 10px;
    }
    input::placeholder { color: #666; }
`;
const NewRecord = styled.button`
    display: flex;
    align-items: center;
    gap: 9px;
    height: 37px;
    flex: none;
    margin-bottom: 5px;
    padding: 0 0 0 6px;
    border: 0;
    border-bottom: 2px solid #f5f5f5;
    background: none;
    font-size: 10px;

    svg { color: #0078d4; }
`;
const Site = styled.button`
    display: flex;
    align-items: center;
    justify-content: space-between;
    height: 54px;
    flex: none;
    margin-bottom: 4px;
    padding: 3px 18px 0 12px;
    border: 0;
    border-left: 3px solid ${p => (p.$on ? "#0078d4" : "#fafafa")};
    background: ${p => (p.$on ? "#e5e5e5" : "#fafafa")};
    text-align: left;
    white-space: nowrap;

    strong {
        display: block;
        margin-bottom: 1px;
        font-size: 10px;
        font-weight: ${p => (p.$on ? 600 : 400)};
        line-height: 14px;
    }
    p {
        font-size: 9px;
        line-height: 12px;
        color: #555;
    }
    svg { color: #aaa; }
`;
const Detail = styled.section`
    display: flex;
    flex-direction: column;
    flex: 1;
    min-width: 0;
    gap: 9px;
    padding: 1px 0 2px;
`;
const DetailHead = styled.div`
    display: flex;
    align-items: center;
    gap: 15px;
    height: 28px;
    flex: none;
    padding: 0 9px 0 16px;
    border-radius: 1px;
    background: #fff;
    box-shadow: 0 0 2px rgba(0, 0, 0, 0.25);
    color: #0078d4;

    h3 {
        flex: 1;
        font-size: 9px;
        font-weight: 600;
        color: #242424;
    }
`;
const DetailBody = styled.dl`
    display: grid;
    grid-template-columns: 1fr 1fr;
    align-content: start;
    flex: 1;
    padding-top: 8px;
    border-radius: 2px;
    background: #fff;
    box-shadow: 0 0 2px rgba(0, 0, 0, 0.2);
    font-size: 9px;
`;
const Field = styled.div`
    min-width: 0;
    height: 49px;
    padding: 0 19px 0 16px;

    dt {
        font-weight: 600;
        line-height: 16px;
    }
    dd {
        margin-top: 7px;
        padding-left: 3px;
        overflow: hidden;
        white-space: nowrap;
        line-height: 15px;
    }
`;
const StatusBar = styled.footer`
    display: flex;
    align-items: center;
    height: 31px;
    flex: none;
    padding: 0 17px 0 11px;
    border-top: 1px solid #dcdcdc;
    color: #555;
    font-size: 9px;

    span {
        flex: 1;
        padding-left: 4px;
        color: #000;
    }
    output {
        width: 44px;
        padding-left: 8px;
        color: #000;
    }
`;
const Zoom = styled.input`
    width: 123px;
    height: 14px;
    margin: 0 12px;
    appearance: none;
    background: linear-gradient(#616161, #616161) left center / var(--fill) 2px no-repeat,
        linear-gradient(#d1d1d1, #d1d1d1) center / 100% 2px no-repeat;

    &::-webkit-slider-thumb {
        appearance: none;
        width: 12px;
        height: 12px;
        border: 2px solid #fff;
        border-radius: 50%;
        background: #616161;
        box-shadow: 0 0 0 1px #bbb;
    }
`;
const PropsPanel = styled.aside`
    width: 258px;
    border-left: 1px solid #d1d1d1;

    ${PanelHead} { color: #111; }
    ${Tabs} {
        gap: 18px;
        height: 28px;
        margin-bottom: 7px;
    }
`;
const Kind = styled.div`
    display: flex;
    align-items: center;
    gap: 5px;
    padding: 12px 0 0 14px;
    line-height: 16px;
    font-size: 9px;
    color: #666;
`;
const ObjectName = styled.div`
    padding: 7px 0 6px 15px;
    font-size: 12px;
    font-weight: 600;
    line-height: 17px;
    color: #333;
`;
const PropRow = styled.div`
    display: flex;
    align-items: center;
    justify-content: space-between;
    height: 25px;
    padding: 0 10px 0 11px;
    font-size: 9px;
    color: #444;
`;
const FillButton = styled.button`
    display: flex;
    justify-content: center;
    width: 35px;
    height: 19px;
    padding: 1px 0 0;
    border: 1px solid #c4c4c4;
    background: #fff;
`;
const SelectBox = styled.div`
    display: flex;
    align-items: center;
    width: 112px;
    height: 19px;
    padding: 0 4px 0 3px;
    border: 1px solid #c4c4c4;
    background: #fff;

    select {
        flex: 1;
        min-width: 0;
        padding: 0;
        border: 0;
        appearance: none;
        background: none;
        color: #000;
    }
    svg + select { padding-left: 5px; }
`;
const Taskbar = styled.footer`
    height: 34px;
    flex: none;
    overflow: hidden;
    background: linear-gradient(90deg, #00181f, #001420 50%, #020a1c);
    color: #fff;
`;
const TaskInner = styled.div`
    display: flex;
    align-items: center;
    height: 40px;
`;
const StartButton = styled(PlainButton)`
    justify-content: center;
    width: 32px;
    margin-right: 8px;
`;
const TaskSearch = styled.div`
    display: flex;
    align-items: center;
    width: 288px;
    height: 40px;
    padding: 0 3px 0 12px;
    border: 1px solid #bbb;
    background: #f2f2f2;
    color: #111;

    input {
        flex: 1;
        min-width: 0;
        padding: 0 0 0 9px;
        border: 0;
        background: none;
        font-size: 14px;
    }
    input::placeholder { color: #333; }
`;
const Pill = styled.span`
    display: flex;
    align-items: center;
    gap: 3px;
    width: 72px;
    height: 32px;
    padding-left: 4px;
    border-radius: 5px;
    background: #e3e3e3;
    color: #666;
    font-size: 10px;
    font-weight: 600;
`;
const TaskButton = styled.button`
    display: flex;
    align-items: center;
    justify-content: center;
    width: 49px;
    height: 40px;
    padding: 0;
    border: 0;
    background: ${p => (p.$on ? "#985926" : "none")};
`;
const Stock = styled.div`
    display: flex;
    align-items: center;
    gap: 8px;
    margin-left: auto;
    font-size: 13px;

    em {
        font-style: normal;
        color: #f2545b;
    }
`;
const Tray = styled.div`
    display: flex;
    align-items: center;
    gap: 9px;
    margin-left: 25px;
`;
const TrayUp = styled.svg`
    fill: none;
    stroke: #fff;
`;
const Language = styled.span`
    margin-left: 11px;
    font-size: 11px;
`;
const Clock = styled.time`
    display: flex;
    flex-direction: column;
    align-items: center;
    width: 58px;
    height: 40px;
    margin-left: 13px;
    padding-top: 2px;
    font-size: 11px;
    line-height: 16px;
`;
const NotifyButton = styled(PlainButton)`
    justify-content: center;
    width: 49px;
    height: 40px;
    margin-right: 9px;
    border-right: 1px solid #3a4350;
`;

export default App;
